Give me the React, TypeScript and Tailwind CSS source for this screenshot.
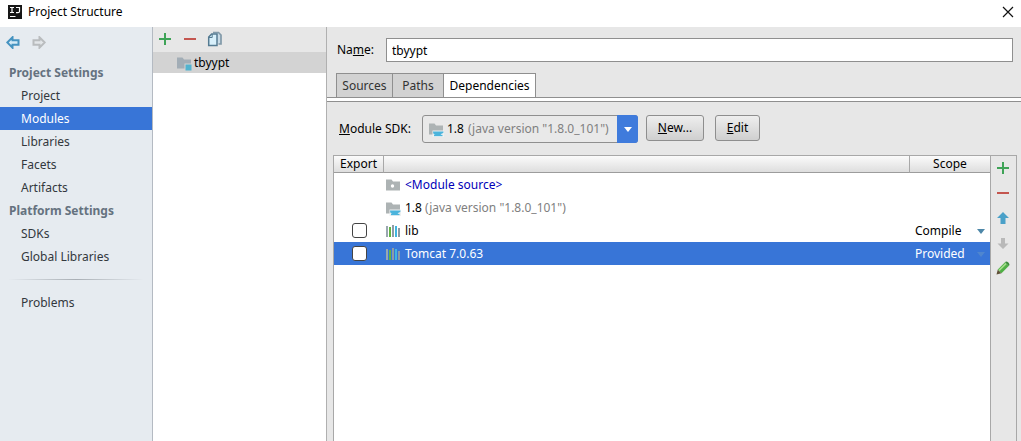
import { useState } from "react";
import type { ReactNode } from "react";

function PlusIcon() {
  return (
    <svg width="14" height="14" viewBox="0 0 14 14" aria-hidden="true">
      <path d="M7 1v12M1 7h12" stroke="#3fa357" strokeWidth="2" fill="none" />
    </svg>
  );
}

function MinusIcon() {
  return (
    <svg width="14" height="14" viewBox="0 0 14 14" aria-hidden="true">
      <path d="M1 7h12" stroke="#c4564f" strokeWidth="2" fill="none" />
    </svg>
  );
}

function CopyIcon() {
  return (
    <svg width="16" height="16" viewBox="0 0 16 16" aria-hidden="true">
      <path d="M6 1.500h5.500l2.500 2.500v9h-2.500" fill="#c9dbe6" stroke="#8199a8" strokeWidth="1.700" />
      <path d="M1.700 6 4.700 3h5.300v11.500H1.700z" fill="#d8f0fb" stroke="#557b92" strokeWidth="1.500" />
      <path d="M2 6.500h3.200V3" fill="none" stroke="#557b92" />
    </svg>
  );
}

function NavArrow({ forward = false }: { forward?: boolean }) {
  return (
    <svg width="14" height="13" viewBox="0 0 14 13" aria-hidden="true">
      <path
        d={forward ? "M12.700 6.500 7.500 1.300v3H1.500v4.400h6v3z" : "M1.300 6.500l5.200-5.200v3h6v4.400h-6v3z"}
        fill={forward ? "#e3e6e9" : "#d5ebf7"}
        stroke={forward ? "#b9bcbe" : "#4593c0"}
        strokeWidth="2"
      />
    </svg>
  );
}

function FolderIcon({ kind }: { kind: "module" | "source" | "sdk" }) {
  return (
    <svg width="16" height="16" viewBox="0 0 16 16" className="shrink-0" aria-hidden="true">
      <path d="M1 2.500h5.500l1.500 2h7v9H1z" fill={kind === "module" ? "#a2adb6" : "#adb3b4"} />
      {kind === "module" && <path d="M8.500 8.500H16V16H8.500z" fill="#d3d3d3" />}
      {kind === "module" && <path d="M9.500 9.500h6v6h-6z" fill="#51b3cf" />}
      {kind === "source" && <circle cx="7.500" cy="9" r="1.700" fill="#fff" />}
      {kind === "sdk" && (
        <>
          <path d="M4.500 9.500H16V16H4.500z" fill="#eef1f2" />
          <path d="M5 10.500h10.500q.5 1.800-2 2.200l-1 1.300H7.500Q5 13.500 5 10.500z" fill="#4bb4dc" />
          <path d="M6 14.500h8.500" stroke="#4bb4dc" strokeWidth="1.300" />
        </>
      )}
    </svg>
  );
}

function LibraryIcon() {
  return (
    <svg width="16" height="16" viewBox="0 0 16 16" className="shrink-0" aria-hidden="true">
      <path d="M1 3h2v11H1z" fill="#9aa7b0" />
      <path d="M4 4h2v10H4z" fill="#62b543" />
      <path d="M7 2h2v12H7z" fill="#8d9da7" />
      <path d="M10 3h2v11h-2z" fill="#40b6e0" />
      <path d="M13 5h2v9h-2z" fill="#8b9ba5" />
    </svg>
  );
}

function VerticalArrow({ down = false }: { down?: boolean }) {
  return (
    <svg width="14" height="14" viewBox="0 0 14 14" aria-hidden="true">
      {down ? (
        <path d="M7 13 1.500 7.500H5V2h4v5.500h3.500z" fill="#b9b9b9" />
      ) : (
        <path d="M7 1l6 6H9.500v6h-5V7H1z" fill="#4aa0c8" />
      )}
    </svg>
  );
}

function PencilIcon() {
  return (
    <svg width="14" height="14" viewBox="0 0 14 14" aria-hidden="true">
      <path d="M.5 13.500 1.800 8.500l3.700 3.700z" fill="#5f5138" />
      <path d="M1.800 8.500 9 1.300 12.700 5l-7.200 7.200z" fill="#4faf45" />
      <path d="M3 9.500 10.200 2.300" stroke="#a5df8c" strokeWidth="1.700" />
      <path d="M9 1.300l1-.8q1.300 0 2.400 1.100T13.500 4l-.8 1z" fill="#3d8d3c" />
    </svg>
  );
}

function Triangle({ className }: { className: string }) {
  return (
    <svg width="8" height="5" viewBox="0 0 8 5" className={className} aria-hidden="true">
      <path d="M0 0h8L4 5z" fill="currentColor" />
    </svg>
  );
}

function IconButton({ label, children, disabled }: { label: string; children: ReactNode; disabled?: boolean }) {
  return (
    <button type="button" aria-label={label} disabled={disabled} className="flex h-[25px] w-[25px] items-center justify-center pr-1 pb-0.5">
      {children}
    </button>
  );
}

const groups = [
  { title: "Project Settings", items: ["Project", "Modules", "Libraries", "Facets", "Artifacts"] },
  { title: "Platform Settings", items: ["SDKs", "Global Libraries"] },
];

function Sidebar() {
  const [active, setActive] = useState("Modules");
  const item = (name: string) => (
    <button
      key={name}
      type="button"
      onClick={() => setActive(name)}
      className={`flex h-[23px] w-full items-center pl-[21px] text-left ${
        active === name ? "bg-[#3875d7] text-white" : "text-[#33383d]"
      }`}
    >
      {name}
    </button>
  );
  return (
    <nav className="w-[153px] shrink-0 border-r border-[#b4bac2] bg-[#e6ebf0]">
      <div className="flex h-[34px] items-center gap-3 pl-1.5 pb-1">
        <button type="button" aria-label="Back"><NavArrow /></button>
        <button type="button" aria-label="Forward" disabled><NavArrow forward /></button>
      </div>
      {groups.map((group) => (
        <div key={group.title}>
          <h2 className="flex h-[23px] items-center pl-[9px] font-bold text-[#65727f]">{group.title}</h2>
          {group.items.map(item)}
        </div>
      ))}
      <div className="flex h-[23px] items-center px-2">
        <div className="h-px w-full bg-linear-to-r from-transparent via-[#a9afb5] to-transparent" />
      </div>
      {item("Problems")}
    </nav>
  );
}

const actionButton =
  "h-[26px] rounded-[3px] border border-[#8e8e8e] bg-linear-to-b from-[#eeeeee] to-[#cfcfcf] text-black";

function ScopeCell({ value, muted }: { value: string; muted?: boolean }) {
  return (
    <div className="relative flex h-full items-center">
      <select
        aria-label="Scope"
        defaultValue={value}
        className="h-full w-full appearance-none bg-transparent pl-1.5 outline-none"
      >
        <option>Compile</option>
        <option>Provided</option>
      </select>
      <Triangle className={`pointer-events-none absolute right-[5px] top-[10px] ${muted ? "text-[#4f86cf]" : "text-[#4d87a8]"}`} />
    </div>
  );
}

function DependencyTable() {
  const headCell = "border-b border-[#9c9c9c] p-0 font-normal";
  const check = "block h-[15px] w-[15px] appearance-none rounded-[3px] border border-[#444444] bg-white mx-auto";
  const entry = "flex items-center gap-1 pl-px";
  return (
    <table className="w-full table-fixed border-separate border-spacing-0">
      <thead>
        <tr className="h-[17px] bg-linear-to-b from-[#fbfbfb] to-[#dcdcdc] leading-4">
          <th className={`${headCell} w-[50px] border-r border-r-[#a8a8a8]`}>Export</th>
          <th className={headCell} aria-label="Dependency" />
          <th className={`${headCell} w-[81px] border-l border-l-[#a8a8a8]`}>Scope</th>
        </tr>
      </thead>
      <tbody>
        <tr className="h-[23px]">
          <td className="p-0" />
          <td className="p-0">
            <div className={`${entry} text-[#0000b8]`}><FolderIcon kind="source" />&lt;Module source&gt;</div>
          </td>
          <td className="p-0" />
        </tr>
        <tr className="h-[23px]">
          <td className="p-0" />
          <td className="p-0">
            <div className={entry}>
              <FolderIcon kind="sdk" />
              <span>1.8 <span className="text-[#808080]">(java version "1.8.0_101")</span></span>
            </div>
          </td>
          <td className="p-0" />
        </tr>
        <tr className="h-[23px]">
          <td className="p-0"><input type="checkbox" aria-label="Export lib" className={check} /></td>
          <td className="p-0"><div className={entry}><LibraryIcon />lib</div></td>
          <td className="h-[23px] p-0"><ScopeCell value="Compile" /></td>
        </tr>
        <tr className="h-[23px] bg-[#3875d7] text-white">
          <td className="p-0"><input type="checkbox" aria-label="Export Tomcat 7.0.63" className={check} /></td>
          <td className="p-0"><div className={entry}><LibraryIcon />Tomcat 7.0.63</div></td>
          <td className="h-[23px] p-0"><ScopeCell value="Provided" muted /></td>
        </tr>
      </tbody>
    </table>
  );
}

export default function App() {
  const tab = "h-6 border border-b-0 border-[#8f8f8f]";
  return (
    <div className="flex min-h-screen flex-col bg-white font-['Noto_Sans','Noto_Sans_CJK_SC',sans-serif] text-[12px] leading-[18px] text-black">
      <header className="flex h-[27px] items-center justify-between pl-2 pr-[7px] pb-1">
        <div className="flex items-center gap-1.5">
          <svg width="14" height="14" viewBox="0 0 14 14" aria-hidden="true">
            <path d="M0 0h14v14H0z" fill="#171717" />
            <path d="M2 2.500h4M4 2.500v5M2 7.500h4M8 2.500h3.500v4q0 1.200-1.500 1.200H8M2 11.500h5.500" stroke="#fff" strokeWidth="1.200" fill="none" />
          </svg>
          <h1>Project Structure</h1>
        </div>
        <button type="button" aria-label="Close">
          <svg width="12" height="12" viewBox="0 0 12 12" aria-hidden="true">
            <path d="M1 1l10 10M11 1 1 11" stroke="#111" strokeWidth="1.200" />
          </svg>
        </button>
      </header>
      <div className="flex flex-1">
        <Sidebar />
        <section aria-label="Modules" className="w-[174px] shrink-0 border-r border-[#b0b0b0] bg-white">
          <div className="flex h-[25px] bg-[#e7e7e7] pl-px">
            <IconButton label="Add module"><PlusIcon /></IconButton>
            <IconButton label="Remove module"><MinusIcon /></IconButton>
            <IconButton label="Copy module"><CopyIcon /></IconButton>
          </div>
          <button type="button" className="flex h-[21px] w-full items-center gap-0.5 bg-[#d3d3d3] pl-[23px]">
            <FolderIcon kind="module" />
            tbyypt
          </button>
        </section>
        <main className="flex min-w-0 flex-1 flex-col bg-[#e7e7e7]">
          <div className="flex items-center pl-[10px] pr-2 pt-[11px]">
            <label htmlFor="name" className="w-[49px]">Na<u>m</u>e:</label>
            <input id="name" defaultValue="tbyypt" className="h-6 min-w-0 flex-1 border border-[#8f8f8f] bg-white px-[5px] outline-none" />
          </div>
          <div role="tablist" className="mt-[11px] flex border-b border-[#8f8f8f] pl-[9px]">
            <button type="button" role="tab" aria-selected="false" className={`${tab} w-14 border-r-0 bg-[#d2d2d2] text-[#333333]`}>Sources</button>
            <button type="button" role="tab" aria-selected="false" className={`${tab} w-[51px] border-r-0 bg-[#d2d2d2] text-[#333333]`}>Paths</button>
            <button type="button" role="tab" aria-selected="true" className={`${tab} w-[93px] bg-white`}>Dependencies</button>
          </div>
          <div className="h-1 border-b border-[#8f8f8f] bg-white" />
          <div className="flex pl-3 pt-[13px]">
            <label htmlFor="sdk" className="flex h-[28px] w-[83px] items-center"><span><u>M</u>odule SDK:</span></label>
            <div className="relative h-[28px] w-[216px]">
              <select id="sdk" className="h-full w-full appearance-none rounded-[3px] border border-[#8f8f8f] bg-[#e9e9e9] pl-6 outline-none">
                <option>1.8</option>
              </select>
              <div className="pointer-events-none absolute inset-0 flex items-center justify-between pl-1.5">
                <FolderIcon kind="sdk" />
                <span className="ml-6 flex-1 whitespace-nowrap text-[#808080]">(java version "1.8.0_101")</span>
                <span className="flex h-full w-[21px] items-center justify-center rounded-r-[3px] bg-[#3f7bdc] text-white">
                  <Triangle className="" />
                </span>
              </div>
            </div>
            <button type="button" className={`${actionButton} ml-2 w-[58px]`}><u>N</u>ew...</button>
            <button type="button" className={`${actionButton} ml-[11px] w-[45px]`}><u>E</u>dit</button>
          </div>
          <div className="mt-3 ml-1.5 mr-1 flex flex-1 border-x border-t border-[#a8a8a8]">
            <div className="min-w-0 flex-1 bg-white">
              <DependencyTable />
            </div>
            <div className="flex w-[26px] flex-col border-l border-[#a8a8a8] pl-px">
              <IconButton label="Add"><PlusIcon /></IconButton>
              <IconButton label="Remove"><MinusIcon /></IconButton>
              <IconButton label="Move up"><VerticalArrow /></IconButton>
              <IconButton label="Move down" disabled><VerticalArrow down /></IconButton>
              <IconButton label="Edit dependency"><PencilIcon /></IconButton>
            </div>
          </div>
        </main>
      </div>
    </div>
  );
}
